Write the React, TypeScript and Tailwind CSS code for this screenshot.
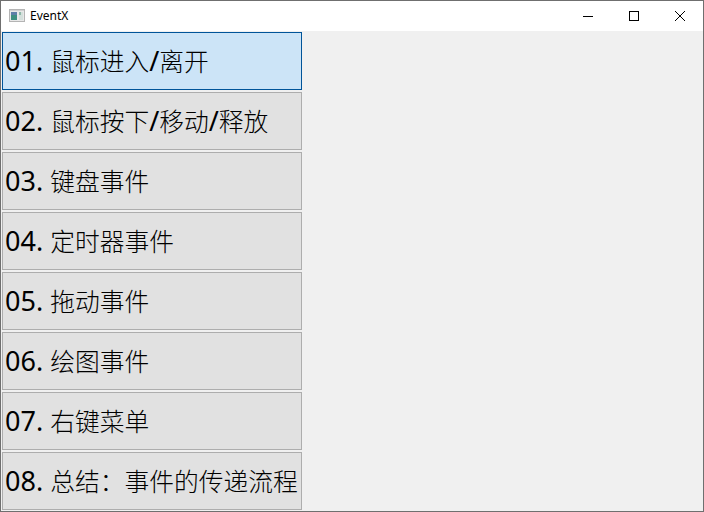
const items = [
  '01. 鼠标进入/离开',
  '02. 鼠标按下/移动/释放',
  '03. 键盘事件',
  '04. 定时器事件',
  '05. 拖动事件',
  '06. 绘图事件',
  '07. 右键菜单',
  '08. 总结：事件的传递流程',
]

function AppIcon() {
  return (
    <svg width="16" height="16" viewBox="0 0 16 16" className="shrink-0">
      <rect x="0.5" y="1.5" width="15" height="12" fill="#e8e8e8" stroke="#b4b4b4" />
      <rect x="1" y="2" width="14" height="1" fill="#d0d0d0" />
      <rect x="2" y="4" width="6" height="8" fill="#3f8f80" />
      <rect x="2" y="4" width="6" height="3" fill="#5f7fa8" />
      <rect x="10" y="4" width="4" height="8" fill="#d4e0dc" />
      <rect x="10" y="4" width="2" height="3" fill="#8fb8a8" />
    </svg>
  )
}

// latin bits are drawn a size bigger than the cjk ones, like the font fallback in the original
function Label({ text }: { text: string }) {
  const parts = text.split(/([0-9./ ]+)/).filter(Boolean)
  return (
    <>
      {parts.map((part, i) =>
        /^[0-9./ ]+$/.test(part) ? (
          <span key={i} className="text-[27px] font-['Noto_Sans',sans-serif]">
            {part}
          </span>
        ) : (
          <span key={i} className="text-[24.75px] font-light font-['Noto_Sans_CJK_SC',sans-serif]">
            {part}
          </span>
        )
      )}
    </>
  )
}

export default function App() {
  return (
    <div className="w-[704px] h-[512px] overflow-hidden border border-[#6f6f6f] bg-[#f0f0f0] flex flex-col font-['Noto_Sans',sans-serif]">
      {/* title bar */}
      <div className="h-[30px] shrink-0 bg-white flex items-center text-black">
        <div className="ml-[8px] mr-[5px]">
          <AppIcon />
        </div>
        <span className="text-[12px]">EventX</span>
        <div className="ml-auto flex h-full">
          <div className="w-[46px] flex items-center justify-center">
            <svg width="10" height="10" viewBox="0 0 10 10">
              <path d="M0 5.5H10" stroke="#000" strokeWidth="1" />
            </svg>
          </div>
          <div className="w-[46px] flex items-center justify-center">
            <svg width="10" height="10" viewBox="0 0 10 10">
              <rect x="0.5" y="0.5" width="9" height="9" fill="none" stroke="#000" />
            </svg>
          </div>
          <div className="w-[46px] flex items-center justify-center">
            <svg width="10" height="10" viewBox="0 0 10 10">
              <path d="M0 0L10 10M10 0L0 10" stroke="#000" strokeWidth="1" />
            </svg>
          </div>
        </div>
      </div>

      {/* buttons */}
      <div className="flex flex-col gap-[2px] pl-[1px] pt-[1px] w-[301px]">
        {items.map((label, i) => (
          <button
            key={label}
            className={`h-[58px] w-[300px] shrink-0 border text-left pl-[2px] whitespace-nowrap text-black ${
              i === 0 ? 'bg-[#cce4f7] border-[#005499]' : 'bg-[#e1e1e1] border-[#adadad]'
            }`}
          >
            <Label text={label} />
          </button>
        ))}
      </div>
    </div>
  )
}
